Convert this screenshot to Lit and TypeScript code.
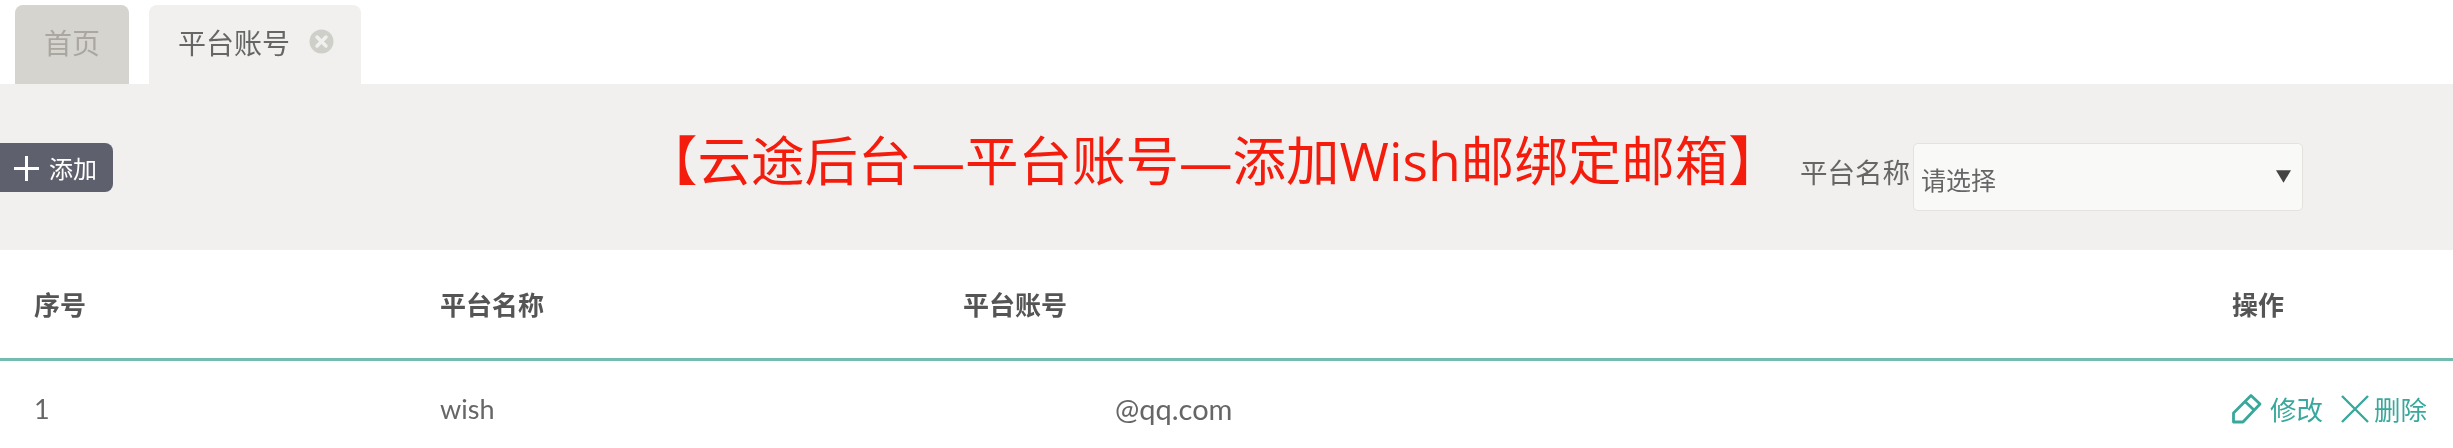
import { LitElement, html, css } from "lit";
import { customElement } from "lit/decorators.js";

@customElement("app-root")
export class AppRoot extends LitElement {
  static styles = css`
    :host {
      display: block;
      width: 2453px;
      height: 448px;
      background: #fff;
      overflow: hidden;
      font-family: "Open Sans", "Noto Sans CJK SC", sans-serif;
      color: #666;
    }
    .blurred { filter: blur(0.6px); height: 448px; }
    .tabs { display: flex; height: 84px; align-items: flex-end; padding: 0 0 0 15px; gap: 20px; box-sizing: border-box; }
    .tab {
      height: 79px;
      box-sizing: border-box;
      border-radius: 8px 8px 0 0;
      display: flex;
      align-items: center;
      font-size: 28px;
      padding-bottom: 6px;
    }
    .home { width: 114px; justify-content: center; background: #d6d4cf; color: #a9a79f; }
    .active { width: 212px; background: #f1f0ee; color: #666; padding-left: 29px; gap: 19px; }
    .close { width: 25px; height: 25px; display: block; }
    .toolbar {
      height: 166px;
      background: #f1f0ee;
      display: flex;
      align-items: center;
    }
    .add {
      width: 113px;
      height: 49px;
      box-sizing: border-box;
      background: #5f606d;
      color: #fff;
      border-radius: 0 8px 8px 0;
      display: flex;
      align-items: center;
      padding-left: 13px;
      gap: 9px;
      font-size: 24px;
    }
    .add svg { width: 27px; height: 27px; display: block; margin-top: 3px; }
    .title {
      margin-left: 531px;
      width: 1156px;
      color: #f41c0c;
      font-size: 53.5px;
      line-height: 60px;
      white-space: nowrap;
      margin-top: -13px;
    }
    .label { font-size: 27.5px; width: 113px; white-space: nowrap; margin-top: 8px; }
    .select {
      width: 390px;
      height: 68px;
      margin-top: 20px;
      box-sizing: border-box;
      background: #f9f9f8;
      border: 1px solid #e3e2de;
      border-radius: 5px;
      display: flex;
      align-items: center;
      justify-content: space-between;
      padding: 4px 11px 0 7px;
      font-size: 25px;
      color: #666;
    }
    .select svg { width: 15px; height: 15px; display: block; margin-top: -5px; }
    .row {
      display: grid;
      grid-template-columns: 406px 523px 1269px 221px;
      padding-left: 34px;
      align-items: center;
      font-size: 26px;
    }
    .head { height: 111px; border-bottom: 3px solid #74bbb0; font-weight: 700; color: #555; box-sizing: border-box; }
    .body { height: 95px; font-family: "Lato", "Noto Sans CJK SC", sans-serif; font-size: 27px; color: #666; }
    .redacted { display: inline-block; width: 152px; }
    .email { font-size: 29px; }
    .ops { display: flex; align-items: center; color: #39a89c; font-size: 26.5px; margin-left: -2px; }
    .ops svg { display: block; flex: none; }
    .edit { width: 32px; height: 32px; margin-right: 8px; }
    .del { width: 30px; height: 30px; margin: 0 4px 0 17px; }
  `;

  render() {
    return html`
      <div class="blurred">
        <div class="tabs">
          <div class="tab home">首页</div>
          <div class="tab active">
            <span>平台账号</span>
            <svg class="close" viewBox="0 0 25 25">
              <circle cx="12.5" cy="12.5" r="12" fill="#cfcfca"></circle>
              <path d="M8 8l9 9M17 8l-9 9" stroke="#f1f0ee" stroke-width="3.4" stroke-linecap="round"></path>
            </svg>
          </div>
        </div>
        <div class="toolbar">
          <div class="add">
            <svg viewBox="0 0 27 27"><path d="M13.5 1v25M1 13.5h25" stroke="#fff" stroke-width="3" fill="none"></path></svg>
            <span>添加</span>
          </div>
          <div class="title">【云途后台—平台账号—添加Wish邮绑定邮箱】</div>
          <div class="label">平台名称</div>
          <div class="select">
            <span>请选择</span>
            <svg viewBox="0 0 13 13"><path d="M0 1h13L6.5 12z" fill="#444"></path></svg>
          </div>
        </div>
        <div class="row head">
          <div>序号</div>
          <div>平台名称</div>
          <div>平台账号</div>
          <div>操作</div>
        </div>
        <div class="row body">
          <div>1</div>
          <div>wish</div>
          <div><span class="redacted"></span><span class="email">@qq.com</span></div>
          <div class="ops">
            <svg class="edit" viewBox="0 0 32 32" fill="none" stroke="#39a89c" stroke-width="2.8" stroke-linejoin="round">
              <path d="M21 2.5l9 8.5L13 29H3.5V20z"></path>
              <path d="M15 8.5l9 8.5"></path>
            </svg>
            <span>修改</span>
            <svg class="del" viewBox="0 0 30 30" fill="none" stroke="#39a89c" stroke-width="2.4">
              <path d="M2 2l26 26M28 2L2 28"></path>
            </svg>
            <span>删除</span>
          </div>
        </div>
      </div>
    `;
  }
}
